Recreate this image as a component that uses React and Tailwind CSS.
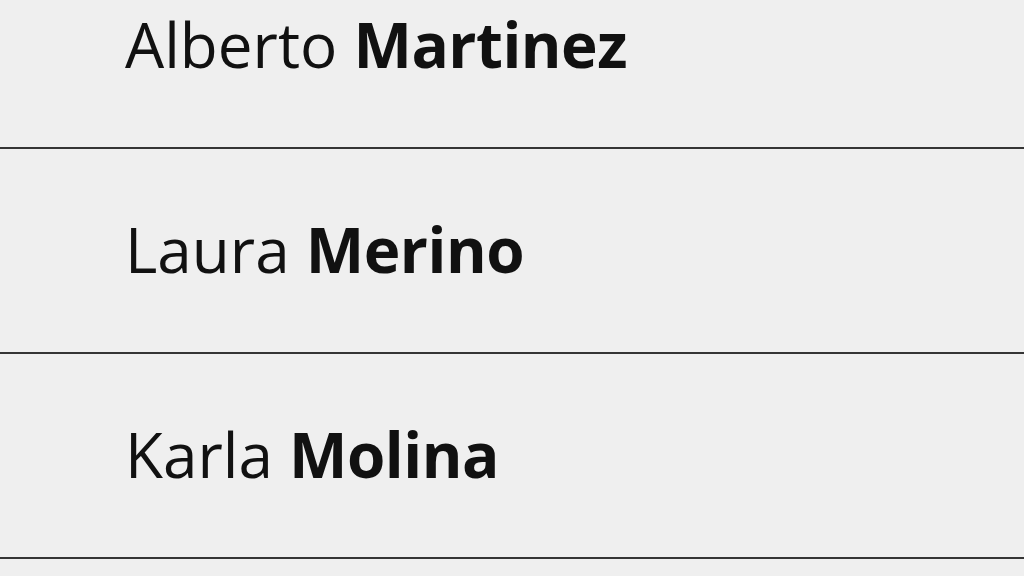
import React from 'react';

const people = [
  { first: 'Alberto', last: 'Martinez' },
  { first: 'Laura', last: 'Merino' },
  { first: 'Karla', last: 'Molina' },
];

const App = () => {
  return (
    <div className="h-[576px] w-[1024px] overflow-hidden bg-[#efefef]" style={{ fontFamily: '"Open Sans", "Noto Sans", sans-serif' }}>
      <ul className="-mt-[56px]">
        {people.map((p) => (
          <li key={p.last} className="flex h-[205px] items-center border-b-2 border-[#353535] pb-1 pl-[125px] text-[62px] leading-none text-[#111]">
            <span>
              {p.first} <span className="font-bold tracking-[-0.5px]">{p.last}</span>
            </span>
          </li>
        ))}
      </ul>
    </div>
  );
};

export default App;
